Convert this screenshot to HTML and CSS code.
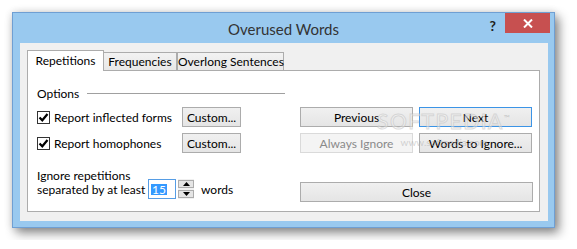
FILE: index.html
```html
<!DOCTYPE html>
<html lang="en">
<head>
    <meta charset="UTF-8">
    <meta name="viewport" content="width=device-width, initial-scale=1.0">
    <title>Overused Words</title>
    <link rel="stylesheet" href="styles.css">
</head>
<body>
    <div class="window">
        <div class="titlebar">
            <div></div>
            <div class="title">Overused Words</div>
            <div class="controls">
                <span class="help">?</span>
                <span class="close-x">
                    <svg width="10" height="9" viewBox="0 0 10 9">
                        <path d="M1 0.5 L9 8.5 M9 0.5 L1 8.5" stroke="#fff" stroke-width="2"/>
                    </svg>
                </span>
            </div>
        </div>

        <div class="client">
            <div class="tabs">
                <div class="tab active">Repetitions</div>
                <div class="tab">Frequencies</div>
                <div class="tab">Overlong Sentences</div>
            </div>

            <div class="panel">
                <div class="group-label">
                    <span>Options</span>
                    <div class="rule"></div>
                </div>

                <div class="row first">
                    <div class="left">
                        <label class="check">
                            <span class="box">
                                <svg width="11" height="11" viewBox="0 0 11 11">
                                    <path d="M1.5 5.5 L4.3 8.3 L9.5 2" fill="none" stroke="#000" stroke-width="2.2"/>
                                </svg>
                            </span>
                            Report inflected forms
                        </label>
                        <button class="btn custom">Custom...</button>
                    </div>
                    <div class="right">
                        <button class="btn half">Previous</button>
                        <button class="btn half default">Next</button>
                    </div>
                </div>

                <div class="row">
                    <div class="left">
                        <label class="check">
                            <span class="box">
                                <svg width="11" height="11" viewBox="0 0 11 11">
                                    <path d="M1.5 5.5 L4.3 8.3 L9.5 2" fill="none" stroke="#000" stroke-width="2.2"/>
                                </svg>
                            </span>
                            Report homophones
                        </label>
                        <button class="btn custom">Custom...</button>
                    </div>
                    <div class="right">
                        <button class="btn half" disabled>Always Ignore</button>
                        <button class="btn half">Words to Ignore...</button>
                    </div>
                </div>

                <div class="row bottom">
                    <div class="left">
                        <div class="ignore-text">Ignore repetitions<br>separated by at least</div>
                        <div class="spin">
                            <div class="spin-input"><span class="sel">15</span></div>
                            <div class="spin-btns">
                                <span class="spin-btn">
                                    <svg width="7" height="4" viewBox="0 0 7 4"><path d="M0 4 L3.5 0 L7 4 Z" fill="#000"/></svg>
                                </span>
                                <span class="spin-btn">
                                    <svg width="7" height="4" viewBox="0 0 7 4"><path d="M0 0 L3.5 4 L7 0 Z" fill="#000"/></svg>
                                </span>
                            </div>
                            <span class="words">words</span>
                        </div>
                    </div>
                    <div class="right">
                        <button class="btn close">Close</button>
                    </div>
                </div>

                <div class="watermark">
                    <span class="wm-big">SOFTPEDIA<sup>™</sup></span>
                    <span class="wm-small">www.softpedia.com</span>
                </div>
            </div>
        </div>
    </div>
</body>
</html>
```

FILE: styles.css
```css
body {
    margin: 0;
    padding: 12px;
    background-color: #fff;
    font-family: Lato, "Noto Sans", sans-serif;
    font-size: 12px;
    color: #000;
}

.window {
    width: 541px;
    height: 214px;
    border: 1px solid #6f9fd3;
    background-color: #99c9ef;
    box-shadow: 4px 5px 10px rgba(0, 0, 0, 0.45), 0 0 8px rgba(0, 0, 0, 0.12);
    display: flex;
    flex-direction: column;
}

.titlebar {
    height: 30px;
    display: grid;
    grid-template-columns: 1fr auto 1fr;
}

.title {
    font-size: 15px;
    line-height: 30px;
    color: #333;
    padding-top: 1px;
}

.controls {
    display: flex;
    justify-content: flex-end;
    align-items: flex-start;
}

.help {
    font-weight: bold;
    font-size: 14px;
    color: #222;
    line-height: 20px;
    margin-top: 3px;
    margin-right: 9px;
}

.close-x {
    width: 45px;
    height: 20px;
    background-color: #c75050;
    display: flex;
    justify-content: center;
    align-items: center;
    margin-right: 4px;
}

.client {
    margin: 0 6px 6px 7px;
    flex: 1;
    background-color: #f0f0f0;
    padding: 7px 8px 9px 7px;
    display: flex;
    flex-direction: column;
}

.tabs {
    display: flex;
    align-items: flex-end;
    height: 20px;
}

.tab {
    height: 18px;
    line-height: 17px;
    box-sizing: border-box;
    border: 1px solid #acacac;
    border-bottom: none;
    white-space: nowrap;
    text-align: center;
    background-image: linear-gradient(#f2f2f2, #e8e8e8);
}

.tab.active {
    height: 21px;
    line-height: 19px;
    background: #fff;
    margin-bottom: -1px;
    position: relative;
    z-index: 1;
    width: 77px;
}

.tab:nth-child(2) {
    width: 74px;
    margin-left: -1px;
}

.tab:nth-child(3) {
    width: 107px;
}

.panel {
    flex: 1;
    background-color: #fff;
    border: 1px solid #acacac;
    padding: 14px 0 0 9px;
    position: relative;
}

.group-label {
    display: flex;
    align-items: center;
    width: 248px;
    height: 16px;
}

.rule {
    flex: 1;
    height: 1px;
    background-color: #a0a0a0;
    margin-left: 8px;
}

.row {
    display: flex;
    margin-top: 6px;
    height: 20px;
}

.row.bottom {
    margin-top: 16px;
}

.left {
    width: 263px;
    display: flex;
    align-items: center;
}

.row.bottom .left {
    align-items: flex-start;
}

.right {
    display: flex;
    gap: 6px;
}

.check {
    width: 145px;
    display: flex;
    align-items: center;
    white-space: nowrap;
}

.box {
    width: 11px;
    height: 11px;
    border: 1px solid #333;
    margin-right: 4px;
    display: flex;
}

.btn {
    font-family: inherit;
    font-size: 12px;
    color: #000;
    height: 20px;
    padding: 0;
    border: 1px solid #acacac;
    background-image: linear-gradient(#f0f0f0, #e5e5e5);
    white-space: nowrap;
}

.btn.custom {
    width: 59px;
}

.btn.half {
    width: 113px;
}

.btn.default {
    border-color: #3c94e6;
}

.btn:disabled {
    color: #8a8a8a;
    background: #f4f4f4;
    border-color: #dadada;
}

.btn.close {
    width: 233px;
    margin-top: 13px;
}

.ignore-text {
    width: 111px;
    line-height: 14px;
    white-space: nowrap;
}

.spin {
    display: flex;
    align-items: center;
    margin-top: 10px;
}

.spin-input {
    width: 24px;
    height: 18px;
    border: 1px solid #569de5;
    background-color: #fff;
    display: flex;
    align-items: center;
    padding-left: 2px;
}

.sel {
    background-color: #3399ff;
    color: #fff;
    line-height: 11px;
    padding: 0 1px;
}

.spin-btns {
    display: flex;
    flex-direction: column;
    gap: 2px;
    margin-left: 2px;
    height: 20px;
    justify-content: center;
    background-color: #f0f0f0;
}

.spin-btn {
    width: 14px;
    height: 6px;
    border: 1px solid #acacac;
    background-color: #e5e5e5;
    display: flex;
    align-items: center;
    justify-content: center;
}

.words {
    margin-left: 7px;
}

.watermark {
    position: absolute;
    left: 349px;
    top: 36px;
    display: flex;
    flex-direction: column;
    align-items: center;
    pointer-events: none;
    color: rgba(170, 170, 170, 0.5);
}

.wm-big {
    font-size: 21px;
    line-height: 22px;
    letter-spacing: 1.5px;
    color: rgba(255, 255, 255, 0.4);
    -webkit-text-stroke: 1px rgba(190, 190, 190, 0.55);
}

.wm-big sup {
    font-size: 8px;
    -webkit-text-stroke: 0;
    color: rgba(170, 170, 170, 0.6);
}

.wm-small {
    font-size: 10px;
    margin-top: 4px;
}
```
